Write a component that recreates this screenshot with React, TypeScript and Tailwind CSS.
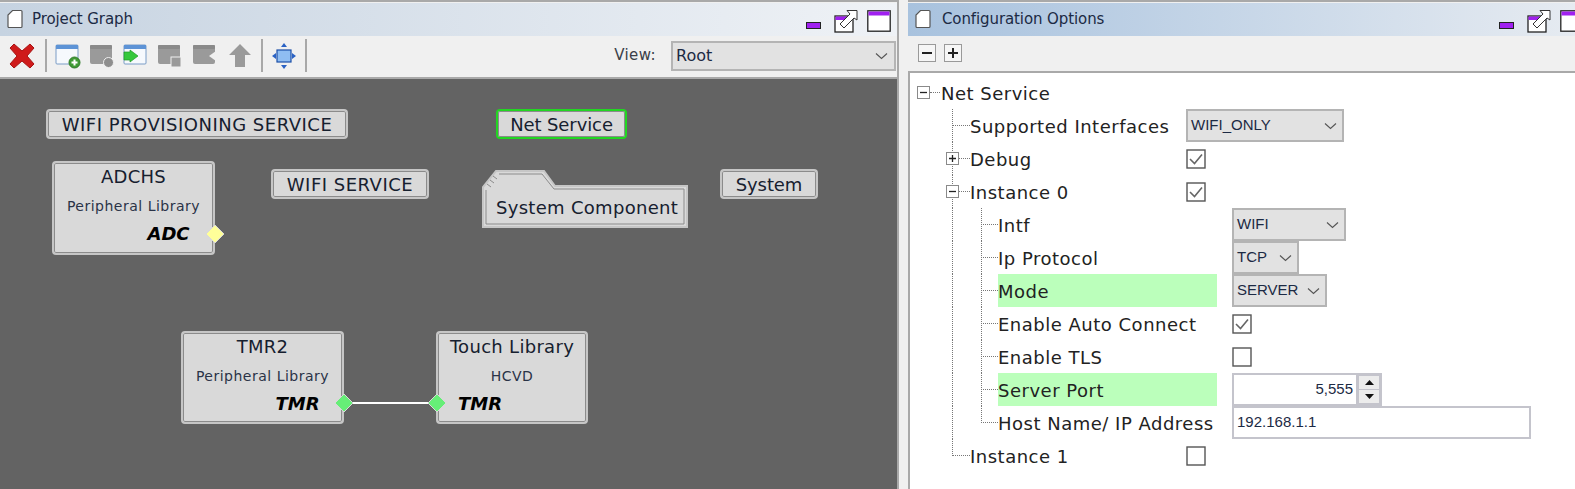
import type { ReactNode } from "react";

const pageIcon = (
  <svg width="16" height="20" viewBox="0 0 16 20" className="shrink-0">
    <path d="M5.5 1.5H14a1 1 0 0 1 1 1v15a1 1 0 0 1-1 1H2a1 1 0 0 1-1-1V6z" fill="#fff" stroke="#555" strokeWidth="1.2" />
  </svg>
);

function WindowIcons() {
  return (
    <div className="flex items-start">
      <svg width="15" height="7" viewBox="0 0 15 7" className="mt-[19px]">
        <rect x="0.5" y="0.5" width="14" height="6" fill="#a020f0" stroke="#222" />
      </svg>
      <svg width="24" height="24" viewBox="0 0 24 24" className="ml-[13px] mt-[6px]">
        <rect x="1" y="7" width="18" height="16" fill="#fff" stroke="#222" strokeWidth="1.3" />
        <rect x="1.5" y="7.5" width="17" height="3.5" fill="#a020f0" />
        <path d="M13 1.5 H23 V11 L20 9 L10 19 L6 15 L16 5z" fill="#fff" stroke="#333" strokeWidth="1" />
      </svg>
      <svg width="24" height="22" viewBox="0 0 24 22" className="ml-[9px] mt-[7px] shrink-0">
        <rect x="0.8" y="0.8" width="22.4" height="20.4" fill="#fff" stroke="#222" strokeWidth="1.3" />
        <rect x="1.5" y="1.5" width="21" height="4" fill="#a020f0" />
      </svg>
    </div>
  );
}

function TitleBar({ title, tint, iconsClass, gap }: { title: string; tint: string; iconsClass: string; gap: string }) {
  return (
    <div className={`flex h-[33px] items-start justify-between pl-[7px] ${tint}`}>
      <div className={`flex items-center pt-[5px] ${gap}`}>
        {pageIcon}
        <span className="text-[15px] tracking-[-0.1px] text-[#1c2a44]">{title}</span>
      </div>
      <div className={iconsClass}>
        <WindowIcons />
      </div>
    </div>
  );
}

const Sep = () => <div className="mx-[8px] h-[33px] w-[2px] bg-[#a8a8a8]" />;

function GreyWindow({ badge }: { badge: ReactNode }) {
  return (
    <svg width="26" height="26" viewBox="0 0 26 26">
      <rect x="1" y="2" width="22" height="19" rx="2" fill="#9a9a9a" />
      <rect x="1" y="2" width="22" height="4" rx="1" fill="#8a8a8a" />
      {badge}
    </svg>
  );
}

function Toolbar() {
  return (
    <div className="flex h-[43px] items-center border-b-2 border-[#a9a9a9] bg-[#f0f0f0] pb-[2px] pl-[7px] pr-[1px]">
      <svg width="30" height="30" viewBox="0 0 30 30">
        <path d="M3 7 L7 3 L15 10 L23 3 L27 7 L20 15 L27 23 L23 27 L15 20 L7 27 L3 23 L10 15z" fill="#cf1b1b" stroke="#a81414" strokeWidth="1" />
      </svg>
      <Sep />
      <svg width="26" height="26" viewBox="0 0 26 26">
        <rect x="1" y="2" width="22" height="19" rx="1" fill="#f6f9fd" stroke="#7a9cc6" />
        <rect x="1" y="2" width="22" height="4" fill="#5d93d6" />
        <circle cx="19.5" cy="19.5" r="5.5" fill="#3f9a35" stroke="#2d7a28" />
        <path d="M19.5 16.5v6M16.5 19.5h6" stroke="#fff" strokeWidth="2" />
      </svg>
      <div className="ml-[8px]">
        <GreyWindow badge={<circle cx="19.5" cy="19.5" r="5" fill="#8e8e8e" stroke="#f0f0f0" />} />
      </div>
      <div className="ml-[8px]">
        <svg width="26" height="26" viewBox="0 0 26 26">
          <rect x="1" y="2" width="22" height="19" rx="1" fill="#f6f9fd" stroke="#7a9cc6" />
          <rect x="1" y="2" width="22" height="4" fill="#5d93d6" />
          <path d="M1 9h6v-2l8 6-8 6v-2H1z" fill="#35c83c" stroke="#1f9a27" strokeWidth="0.7" />
        </svg>
      </div>
      <div className="ml-[8px]">
        <GreyWindow badge={<rect x="14" y="14" width="10" height="10" fill="#9a9a9a" stroke="#f0f0f0" />} />
      </div>
      <div className="ml-[9px]">
        <GreyWindow badge={<path d="M24 8 L17 13 L24 18z" fill="#f0f0f0" />} />
      </div>
      <svg width="24" height="26" viewBox="0 0 24 26" className="ml-[10px]">
        <path d="M12 1 L23 12 H17 V24 H7 V12 H1z" fill="#9a9a9a" />
      </svg>
      <div className="w-[1px]" />
      <Sep />
      <svg width="26" height="28" viewBox="0 0 26 28">
        <rect x="6" y="8" width="14" height="12" fill="#8fbdf2" stroke="#1b4fa8" strokeWidth="1.2" />
        <path d="M13 1l3 4h-6zM13 27l3-4h-6zM1 14l4-3v6zM25 14l-4-3v6z" fill="#2a62c4" />
      </svg>
      <Sep />
      <span className="ml-auto text-[15px] tracking-[0.4px] text-[#3a3f49]">View:</span>
      <div className="ml-[15px] flex h-[30px] w-[225px] items-center justify-between border-2 border-[#b4b4b4] bg-[#e2e2e2] pl-[3px] pr-[6px]">
        <span className="text-[16px] text-[#1c2a44]">Root</span>
        <Chevron />
      </div>
    </div>
  );
}

function Chevron() {
  return (
    <svg width="13" height="8" viewBox="0 0 13 8">
      <path d="M1 1.5 L6.5 6.5 L12 1.5" fill="none" stroke="#555" strokeWidth="1.1" />
    </svg>
  );
}

const nodeBase =
  "absolute rounded-[4px] border-2 bg-[#d9d9d9] text-[#16202f] text-center shadow-[inset_0_0_0_1px_#8b8b8b]";

function Pill({ label, className, selected }: { label: string; className: string; selected?: boolean }) {
  return (
    <div className={`${nodeBase} flex h-[30px] items-center justify-center pt-[1px] text-[18px] ${selected ? "border-[#22d622]" : "border-[#c6c6c6]"} ${className}`}>
      {label}
    </div>
  );
}

function Diamond({ color, className }: { color: string; className: string }) {
  return (
    <svg width="20" height="20" viewBox="0 0 20 20" className={`absolute ${className}`}>
      <path d="M10 1 L19 10 L10 19 L1 10z" fill={color} stroke="#d8d8d8" strokeWidth="1" />
    </svg>
  );
}

function Box({ title, sub, tag, className, tagClass }: { title: string; sub: string; tag: string; className: string; tagClass: string }) {
  return (
    <div className={`${nodeBase} border-[#c6c6c6] ${className}`}>
      <div className="pt-[2px] text-[18px] leading-[24px] tracking-[0.3px]">{title}</div>
      <div className="mt-[7px] text-[14px] leading-[20px] tracking-[0.5px] text-[#2a3347]">{sub}</div>
      <div className={`mt-[7px] text-[18px] font-bold italic leading-[22px] text-black ${tagClass}`}>{tag}</div>
    </div>
  );
}

function Canvas() {
  return (
    <div className="relative flex-1 overflow-hidden bg-[#636363]">
      <Pill label="WIFI PROVISIONING SERVICE" className="left-[46px] top-[30px] w-[302px] tracking-[0.5px]" />
      <Pill label="Net Service" className="left-[496px] top-[30px] w-[131px] tracking-[-0.1px]" selected />
      <Pill label="WIFI SERVICE" className="left-[271px] top-[90px] w-[158px] tracking-[0.5px]" />
      <Pill label="System" className="left-[720px] top-[90px] w-[98px] tracking-[-0.1px]" />
      <Box title="ADCHS" sub="Peripheral Library" tag="ADC" className="left-[52px] top-[82px] h-[94px] w-[163px]" tagClass="pl-[70px]" />
      <Diamond color="#ffff99" className="left-[205px] top-[145px]" />
      <div className="absolute left-[482px] top-[91px] h-[58px] w-[206px]">
        <svg width="206" height="58" viewBox="0 0 206 58" className="absolute inset-0">
          <path d="M1 57 V17 L14 1 H62 L73 16 H205 V57z" fill="#d9d9d9" stroke="#c6c6c6" strokeWidth="2" />
          <path d="M4 20 V54 H202 V19 H72 L60 4 H17" fill="none" stroke="#8b8b8b" strokeWidth="1" />
          <path d="M5 14 L9 17 M8 10 L12 13 M11 6 L15 9" stroke="#8b8b8b" strokeWidth="1" />
        </svg>
        <span className="absolute left-[14px] top-[24px] whitespace-nowrap text-[18px] tracking-[0.3px] text-[#16202f]">System Component</span>
      </div>
      <Box title="TMR2" sub="Peripheral Library" tag="TMR" className="left-[181px] top-[252px] h-[93px] w-[163px]" tagClass="pl-[70px]" />
      <Box title="Touch Library" sub="HCVD" tag="TMR" className="left-[436px] top-[252px] h-[93px] w-[152px]" tagClass="-ml-[64px]" />
      <div className="absolute left-[344px] top-[323px] h-[2px] w-[92px] bg-white" />
      <Diamond color="#66ee77" className="left-[334px] top-[314px]" />
      <Diamond color="#66ee77" className="left-[427px] top-[314px]" />
    </div>
  );
}

function Expander({ open, className }: { open: boolean; className: string }) {
  return (
    <svg width="13" height="13" viewBox="0 0 13 13" className={`absolute z-10 ${className}`}>
      <rect x="0.5" y="0.5" width="12" height="12" fill="#fff" stroke="#8a8a8a" />
      <path d={open ? "M3 6.5h7" : "M3 6.5h7M6.5 3v7"} stroke="#222" strokeWidth="1.3" />
    </svg>
  );
}

function Check({ checked }: { checked?: boolean }) {
  return (
    <svg width="20" height="20" viewBox="0 0 20 20" className="shrink-0">
      <rect x="1" y="1" width="18" height="18" fill="#fff" stroke="#555" strokeWidth="1.4" />
      {checked && <path d="M4 10 L8.5 14.5 L16 5.5" fill="none" stroke="#666" strokeWidth="1.6" />}
    </svg>
  );
}

const controlFont = "font-['Liberation_Sans',sans-serif] text-[15px] text-[#1c2a44]";

function Combo({ value, className }: { value: string; className: string }) {
  return (
    <div className={`flex h-[33px] items-center justify-between border-2 border-[#b4b4b4] bg-[#e2e2e2] pl-[3px] pr-[5px] ${controlFont} ${className}`}>
      <span>{value}</span>
      <Chevron />
    </div>
  );
}

type RowProps = { label: string; level: 1 | 2; last?: boolean; expander?: "open" | "closed"; green?: boolean; control?: ReactNode };

function Row({ label, level, last, expander, green, control }: RowProps) {
  return (
    <div className="flex h-[33px] items-stretch pl-[42px]">
      {level === 2 && <div className="w-[29px] border-l border-dotted border-[#777]" />}
      <div className={`relative ${level === 1 ? "w-[18px]" : "w-[17px]"}`}>
        <div className={`absolute left-0 top-0 border-l border-dotted border-[#777] ${last ? "h-[17px]" : "h-full"}`} />
        <div className="absolute left-0 right-0 top-[16px] border-t border-dotted border-[#777]" />
        {expander && <Expander open={expander === "open"} className="left-[-6px] top-[10px]" />}
      </div>
      <div className={`flex items-center pt-[2px] text-[18px] tracking-[0.5px] text-[#222] ${level === 1 ? "w-[216px]" : "w-[219px]"} ${green ? "bg-[#bbffbb]" : ""}`}>
        <span className="whitespace-nowrap">{label}</span>
      </div>
      <div className={`flex items-center ${level === 2 ? "pl-[15px]" : ""}`}>{control}</div>
    </div>
  );
}

function Tree() {
  return (
    <div className="flex-1 border-l-2 border-[#a9a9a9] bg-white pt-[3px]">
      <div className="relative flex h-[33px] items-center pl-[31px] pt-[2px] text-[18px] tracking-[0.5px] text-[#222]">
        <Expander open className="left-[7px] top-[10px]" />
        <div className="absolute left-[20px] top-[16px] w-[10px] border-t border-dotted border-[#777]" />
        Net Service
      </div>
      <Row label="Supported Interfaces" level={1} control={<Combo value="WIFI_ONLY" className="w-[158px]" />} />
      <Row label="Debug" level={1} expander="closed" control={<Check checked />} />
      <Row label="Instance 0" level={1} expander="open" control={<Check checked />} />
      <Row label="Intf" level={2} control={<Combo value="WIFI" className="w-[114px]" />} />
      <Row label="Ip Protocol" level={2} control={<Combo value="TCP" className="w-[67px]" />} />
      <Row label="Mode" level={2} green control={<Combo value="SERVER" className="w-[95px]" />} />
      <Row label="Enable Auto Connect" level={2} control={<Check checked />} />
      <Row label="Enable TLS" level={2} control={<Check />} />
      <Row
        label="Server Port"
        level={2}
        green
        control={
          <div className={`flex h-[33px] w-[150px] items-center justify-end border-2 border-[#c4c4cc] bg-white ${controlFont}`}>
            <span className="pr-[3px]">5,555</span>
            <div className="flex h-full w-[24px] flex-col gap-[1px] border-l-2 border-[#c4c4cc] bg-[#c4c4cc] p-[1px]">
              <div className="flex flex-1 items-center justify-center bg-[#ececec]">
                <svg width="9" height="5" viewBox="0 0 9 5"><path d="M4.5 0 L9 5 H0z" fill="#111" /></svg>
              </div>
              <div className="flex flex-1 items-center justify-center bg-[#ececec]">
                <svg width="9" height="5" viewBox="0 0 9 5"><path d="M0 0 H9 L4.5 5z" fill="#111" /></svg>
              </div>
            </div>
          </div>
        }
      />
      <Row
        label="Host Name/ IP Address"
        level={2}
        last
        control={
          <div className={`flex h-[33px] w-[299px] items-center border-2 border-[#c4c4cc] bg-white pl-[3px] ${controlFont}`}>
            192.168.1.1
          </div>
        }
      />
      <Row label="Instance 1" level={1} last control={<Check />} />
    </div>
  );
}

export default function App() {
  return (
    <div className="flex h-[489px] w-[1575px] overflow-hidden bg-[#f0f0f0] font-['DejaVu_Sans',sans-serif]">
      <div className="flex w-[899px] shrink-0 flex-col border-r-2 border-t-2 border-[#a9a9a9] pt-[1px]">
        <TitleBar title="Project Graph" tint="bg-gradient-to-r from-[#c6d3e1] to-[#eff2f6]" iconsClass="pr-[6px]" gap="gap-[9px]" />
        <Toolbar />
        <Canvas />
      </div>
      <div className="ml-[9px] flex flex-1 flex-col overflow-hidden border-t-2 border-[#a9a9a9] pt-[1px]">
        <TitleBar title="Configuration Options" tint="bg-gradient-to-r from-[#a8c2de] to-[#e6ebf1]" iconsClass="-mr-[9px]" gap="gap-[11px]" />
        <div className="flex h-[37px] items-center gap-[8px] border-b-2 border-[#a9a9a9] bg-[#f0f0f0] pb-[2px] pl-[10px]">
          <div className="flex h-[18px] w-[18px] items-center justify-center border border-[#9a9a9a] bg-[#f6f6f6]">
            <div className="h-[2px] w-[10px] bg-[#222]" />
          </div>
          <div className="relative flex h-[18px] w-[18px] items-center justify-center border border-[#9a9a9a] bg-[#f6f6f6]">
            <div className="h-[2px] w-[10px] bg-[#222]" />
            <div className="absolute h-[10px] w-[2px] bg-[#222]" />
          </div>
        </div>
        <Tree />
      </div>
    </div>
  );
}
